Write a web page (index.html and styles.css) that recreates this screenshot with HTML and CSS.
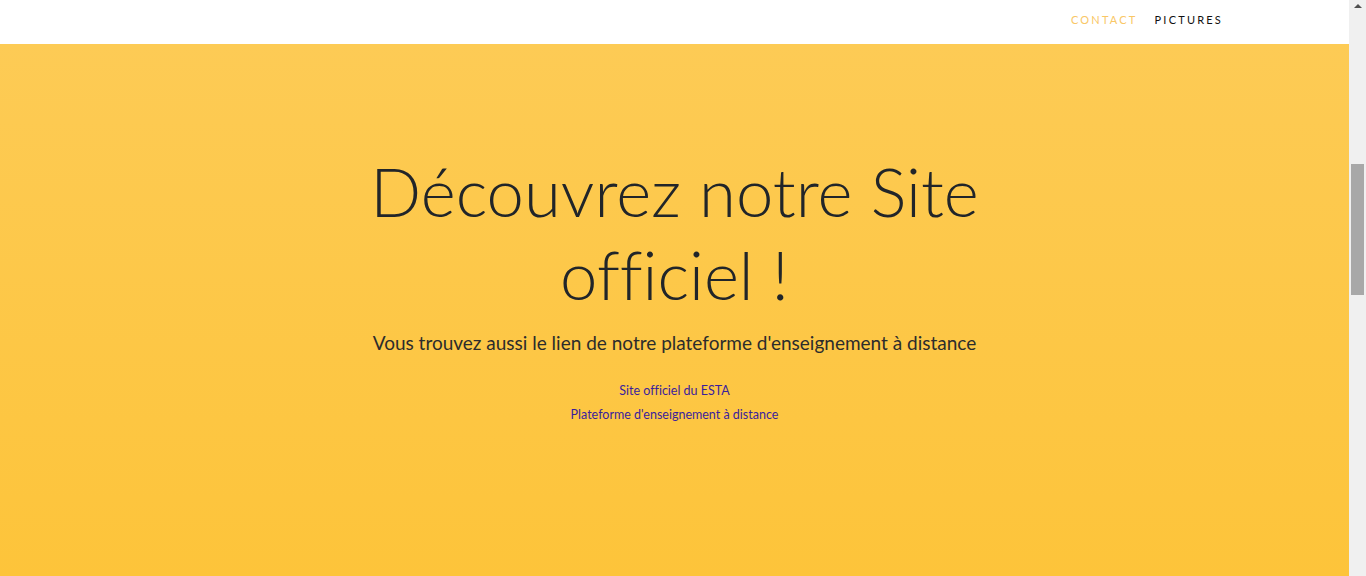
FILE: index.html
```html
<!DOCTYPE html>
<html lang="fr">
<head>
<meta charset="utf-8">
<title>ESTA</title>
<link rel="stylesheet" href="styles.css">
</head>
<body>
<div class="page">
  <div class="main">
    <nav class="nav">
      <a class="nav-link active" href="#">CONTACT</a>
      <a class="nav-link" href="#">PICTURES</a>
    </nav>
    <header class="hero">
      <h1 class="title">Découvrez notre Site officiel !</h1>
      <p class="lead">Vous trouvez aussi le lien de notre plateforme d'enseignement à distance</p>
      <div class="links">
        <a href="#">Site officiel du ESTA</a>
        <a href="#">Plateforme d'enseignement à distance</a>
      </div>
    </header>
  </div>
  <div class="scrollbar">
    <div class="arrow"></div>
    <div class="thumb"></div>
  </div>
</div>
</body>
</html>
```

FILE: styles.css
```css
html, body {
  margin: 0;
  padding: 0;
  height: 100%;
  overflow: hidden;
}
body {
  font-family: "Lato", "Noto Sans", sans-serif;
  color: #212529;
  font-variant-ligatures: none;
}
.page {
  display: flex;
  height: 576px;
}
.main {
  flex: 1;
  display: flex;
  flex-direction: column;
}
.nav {
  height: 44px;
  background: #fff;
  display: flex;
  justify-content: flex-end;
  align-items: center;
  gap: 17px;
  padding-right: 126px;
  padding-bottom: 5px;
  box-sizing: border-box;
}
.nav-link {
  font-family: "Lato", sans-serif;
  font-size: 11px;
  font-weight: 400;
  letter-spacing: 2.2px;
  color: #111;
  text-decoration: none;
}
.nav-link.active {
  color: #f9c766;
}
.hero {
  flex: 1;
  background: linear-gradient(to bottom, #fdcb55 0%, #fdc43a 100%);
  display: flex;
  flex-direction: column;
  align-items: center;
  text-align: center;
  padding-top: 106px;
}
.title {
  margin: 0;
  width: 640px;
  font-family: "Lato", sans-serif;
  font-weight: 300;
  font-size: 67px;
  line-height: 83px;
  color: #212529;
  font-variant-ligatures: none;
}
.lead {
  margin: 13px 0 0;
  font-family: "Lato", sans-serif;
  font-size: 19px;
  line-height: 28px;
  color: #2c2c2c;
}
.links {
  margin-top: 22px;
  display: flex;
  flex-direction: column;
  align-items: center;
}
.links a {
  font-family: "Lato", sans-serif;
  font-size: 12.5px;
  line-height: 24px;
  color: #3b1e9c;
  text-decoration: none;
  font-variant-ligatures: none;
}
.scrollbar {
  width: 17px;
  background: #f0f0f0;
  display: flex;
  flex-direction: column;
  align-items: center;
}
.arrow {
  margin-top: 4px;
  width: 0;
  height: 0;
  border-left: 4px solid transparent;
  border-right: 4px solid transparent;
  border-bottom: 4px solid #505050;
}
.thumb {
  margin-top: 156px;
  width: 13px;
  height: 131px;
  background: #a8a8a8;
}
```
